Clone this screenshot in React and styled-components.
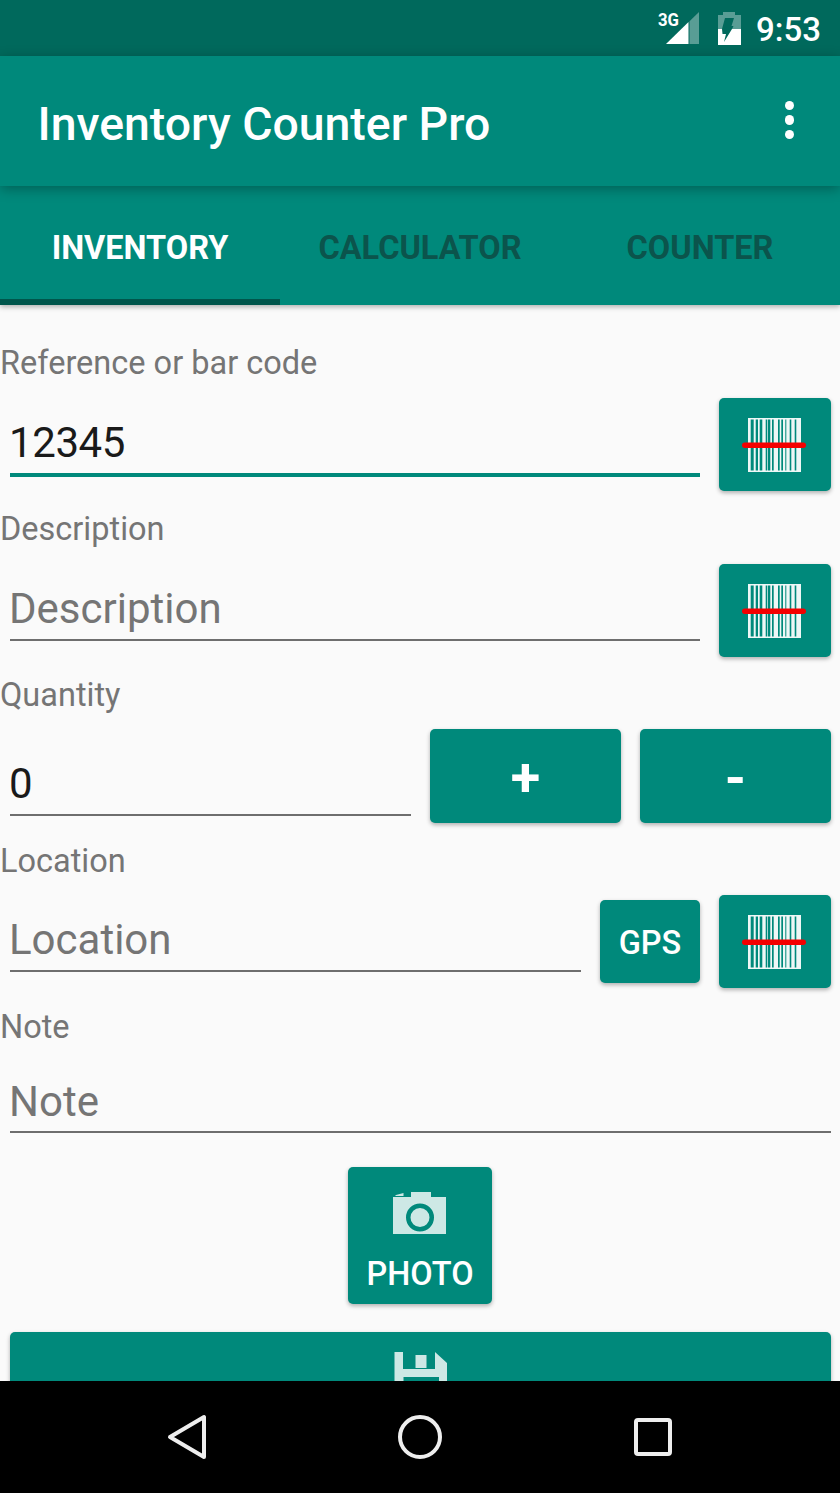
import React from "react";
import styled, { createGlobalStyle } from "styled-components";

const Global = createGlobalStyle`
  html, body { margin: 0; padding: 0; background: #000; }
  * { box-sizing: border-box; }
  body { font-family: Roboto, "Liberation Sans", sans-serif; }
`;
const Screen = styled.div`
  width: 840px; height: 1493px; display: flex; flex-direction: column; overflow: hidden; background: #fafafa;
`;
const StatusBar = styled.div`
  height: 56px; flex: none; background: #00695c; display: flex; align-items: center; justify-content: flex-end;
  color: #fff; padding-right: 19px;
`;
const StatusGap = styled.span`
  width: 18px;
`;
const Clock = styled.span`
  font-size: 33px; font-weight: 500; margin-left: 15px; line-height: 56px; padding-top: 3px;
`;
const AppBar = styled.header`
  height: 130px; flex: none; background: #00897b; display: flex; align-items: center; justify-content: space-between;
  padding: 0 38px 0 37.5px; position: relative; z-index: 3; box-shadow: 0 3px 12px rgba(0,0,0,.3);
`;
const Title = styled.h1`
  margin: 0; font-size: 46.4px; font-weight: 500; color: #fff; position: relative; top: 3px;
`;
const Dots = styled.div`
  display: flex; flex-direction: column; gap: 5px; margin-right: 8px; position: relative; top: -1px;
`;
const Dot = styled.i`
  display: block; width: 9.5px; height: 9.5px; border-radius: 50%; background: #fff;
`;
const TabBar = styled.nav`
  height: 119px; flex: none; background: #00897b; display: flex; position: relative; z-index: 2;
  box-shadow: 0 2px 5px rgba(0,0,0,.3);
`;
const Tab = styled.div`
  flex: 1; display: flex; align-items: center; justify-content: center; padding-top: 11px;
  font-size: 32.5px; font-weight: 700; color: ${p => (p.$active ? "#fff" : "#0b544c")};
  border-bottom: 6px solid ${p => (p.$active ? "#00564c" : "transparent")};
`;
const Content = styled.main`
  flex: 1; min-height: 0; overflow: hidden; padding-top: 41px; background: #fafafa;
`;
const Label = styled.div`
  font-size: 32.5px; line-height: 34px; color: #757575;
`;
const Row = styled.div`
  height: 132px; display: flex; align-items: flex-start; gap: 19px; padding: ${p => p.$top ?? 18}px 9px 0 10px;
`;
const Field = styled.div`
  flex: ${p => (p.$fixed ? "none" : "1")}; min-width: 0; height: ${p => p.$h}px; display: flex; align-items: flex-end;
  font-size: 42px; line-height: 48px; padding-bottom: ${p => p.$pb ?? 6}px; text-indent: -1px;
  letter-spacing: ${p => (p.$digits ? "-0.4px" : "0")};
  color: ${p => (p.$hint ? "#757575" : "#1a1a1a")};
  border-bottom: ${p => (p.$focus ? "4px solid #00897b" : "2px solid #6e6e6e")};
`;
const Btn = styled.div`
  flex: none; width: ${p => p.$w}px; height: ${p => p.$h ?? 93}px; border-radius: 5px; background: #00897b;
  display: flex; align-items: center; justify-content: center; color: #fff;
  font-size: ${p => p.$fs ?? 32.5}px; font-weight: 500;
  box-shadow: 0 2px 4px rgba(0,0,0,.3);
`;
const Sign = styled.span`
  font-size: 54px; font-weight: 700; line-height: 1; position: relative; top: 2px;
`;
const Gps = styled(Btn)`
  margin-top: 5px; padding-top: 2px;
`;
const NoteRow = styled.div`
  height: 123px; padding: 0 9px 0 10px; display: flex; flex-direction: column;
`;
const PhotoWrap = styled.div`
  display: flex; justify-content: center;
`;
const PhotoBtn = styled(Btn)`
  flex-direction: column; justify-content: flex-start; gap: 21px; padding-top: 25px;
`;
const PhotoText = styled.span`
  line-height: 38px;
`;
const SaveBtn = styled(Btn)`
  width: 821px; height: 140px; margin: 28px 0 0 10px; align-items: flex-start; padding-top: 20px;
`;
const NavBar = styled.footer`
  height: 112px; flex: none; background: #000; display: flex; align-items: center; position: relative; z-index: 4;
  padding-left: 166px;
`;
const NavIcon = styled.svg`
  display: block; margin-right: ${p => p.$mr ?? 0}px;
`;

const gaps = [
  [2.7, 3], [7.7, 2.3], [11.7, 2.6], [17.7, 1.6], [20, 2.3], [24, 1.7],
  [30, 1.7], [33.3, 1.7], [37.3, 1], [41.7, 1.6], [46.7, 1.6],
];

const Scan = () => (
  <svg width="66" height="56" viewBox="0 0 66 56">
    <rect x="6" y="1" width="53" height="54" fill="#eef7f6" />
    {gaps.map(([x, w]) => <rect key={x} x={6 + x} y="2.5" width={w} height="51" fill="#00897b" />)}
    <rect x="0" y="25.5" width="64" height="5.5" rx="2.75" fill="#f40000" />
  </svg>
);
const Camera = () => (
  <svg width="54" height="42" viewBox="0 0 54 42">
    <path fill="#cde8e5" fillRule="evenodd"
      d="M0 5 H18 V0 H38 V5 H53 V42 H0 Z M27 11.5 A14 14 0 1 0 27.01 39.5 A14 14 0 1 0 27 11.5 Z M27 16 A9.5 9.5 0 1 1 26.99 35 A9.5 9.5 0 1 1 27 16 Z" />
    <path fill="#cde8e5" d="M2 4 L3 3 L10.5 1 V4 Z" />
  </svg>
);
const Save = () => (
  <svg width="54" height="54" viewBox="0 0 54 54">
    <path fill="#cde8e5" fillRule="evenodd"
      d="M0.5 0 H9 V17 H41 V0 L53 11 V54 H0.5 Z M9.5 25 V54 H45 V25 Z" />
    <path fill="#cde8e5" d="M21.5 3 H32.5 V16 H21.5 Z" />
  </svg>
);

const Signal = () => (
  <svg width="42" height="48" viewBox="0 -7 42 48">
    <path d="M41 1 V33 H31.5 V10.2 Z" fill="#fff" opacity=".35" />
    <path d="M30.5 11 V33 H8 Z" fill="#fff" />
    <text x="0" y="15" fill="#fff" fontSize="18" fontWeight="700" fontFamily="Roboto, sans-serif" textLength="21" lengthAdjust="spacingAndGlyphs">3G</text>
  </svg>
);
const Battery = () => (
  <svg width="23" height="33" viewBox="0 0 23 33">
    <path fillRule="evenodd" d="M5 0 H17 V3 H23 V17 H0 V3 H5 Z M7 6 H16 L13.5 14 H15.5 L14 17 H4 Z" fill="#fff" opacity=".35" />
    <path fillRule="evenodd" d="M0 17 H23 V33 H0 Z M4 17 H14 L6 30 L8 22 H4.5 Z" fill="#fff" />
  </svg>
);

export default function App() {
  return (
    <Screen>
      <Global />
      <StatusBar>
        <Signal />
        <StatusGap />
        <Battery />
        <Clock>9:53</Clock>
      </StatusBar>
      <AppBar>
        <Title>Inventory Counter Pro</Title>
        <Dots><Dot /><Dot /><Dot /></Dots>
      </AppBar>
      <TabBar>
        <Tab $active>INVENTORY</Tab>
        <Tab>CALCULATOR</Tab>
        <Tab>COUNTER</Tab>
      </TabBar>
      <Content>
        <Label>Reference or bar code</Label>
        <Row>
          <Field $focus $digits $h={79}>12345</Field>
          <Btn $w={112}><Scan /></Btn>
        </Row>
        <Label>Description</Label>
        <Row>
          <Field $hint $h={77}>Description</Field>
          <Btn $w={112}><Scan /></Btn>
        </Row>
        <Label>Quantity</Label>
        <Row $top={17}>
          <Field $h={87}>0</Field>
          <Btn $w={191} $h={94}><Sign>+</Sign></Btn>
          <Btn $w={191} $h={94}><Sign>-</Sign></Btn>
        </Row>
        <Label>Location</Label>
        <Row $top={17}>
          <Field $hint $h={77}>Location</Field>
          <Gps $w={100} $h={83}>GPS</Gps>
          <Btn $w={112}><Scan /></Btn>
        </Row>
        <Label>Note</Label>
        <NoteRow>
          <Field $hint $fixed $pb={5} $h={89}>Note</Field>
        </NoteRow>
        <PhotoWrap>
          <PhotoBtn $w={144} $h={137}>
            <Camera />
            <PhotoText>PHOTO</PhotoText>
          </PhotoBtn>
        </PhotoWrap>
        <SaveBtn $w={821}><Save /></SaveBtn>
      </Content>
      <NavBar>
        <NavIcon $mr={189} width="42" height="46" viewBox="0 0 42 46">
          <path d="M38 3 V43 L4 23 Z" fill="none" stroke="#eee" strokeWidth="4" strokeLinejoin="round" />
        </NavIcon>
        <NavIcon $mr={190} width="46" height="46" viewBox="0 0 46 46">
          <circle cx="23" cy="23" r="20" fill="none" stroke="#eee" strokeWidth="4" />
        </NavIcon>
        <NavIcon width="40" height="40" viewBox="0 0 40 40">
          <rect x="3" y="3" width="34" height="34" rx="2" fill="none" stroke="#eee" strokeWidth="4" />
        </NavIcon>
      </NavBar>
    </Screen>
  );
}
